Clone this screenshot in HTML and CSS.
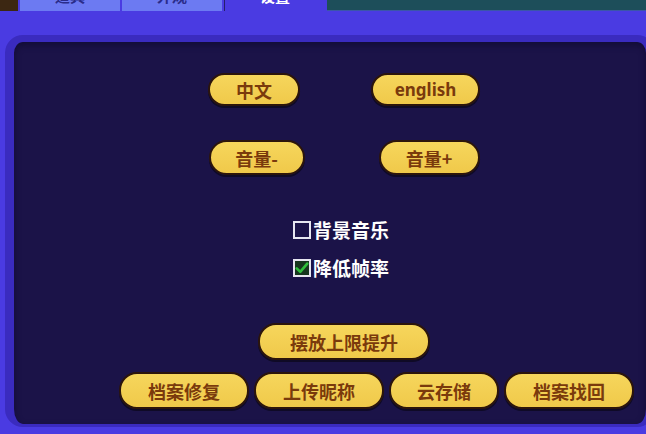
FILE: index.html
```html
<!DOCTYPE html>
<html>
<head>
	<meta charset="utf-8">
	<title>设置</title>
	<link rel="stylesheet" href="styles.css">
</head>
<body>
	<div class="tab-bar">
		<div class="tab-edge"></div>
		<div class="tab"><span>道具</span></div>
		<div class="tab"><span>外观</span></div>
		<div class="tab tab-active"><span>设置</span></div>
		<div class="tab-rest"></div>
	</div>

	<div class="panel">
		<div class="row row-lang">
			<button class="btn btn-zh">中文</button>
			<button class="btn btn-en">english</button>
		</div>
		<div class="row row-volume">
			<button class="btn btn-vol-down">音量-</button>
			<button class="btn btn-vol-up">音量+</button>
		</div>

		<div class="options">
			<label class="option">
				<span class="check"></span>背景音乐
			</label>
			<label class="option">
				<span class="check checked">
					<svg viewBox="0 0 16 16" width="14" height="14"><path d="M2 8.5 L6 12.5 L14 3" fill="none" stroke="#2fbf3c" stroke-width="3" stroke-linecap="round" stroke-linejoin="round"/></svg>
				</span>降低帧率
			</label>
		</div>

		<div class="row row-limit">
			<button class="btn btn-limit">摆放上限提升</button>
		</div>
		<div class="row row-save">
			<button class="btn btn-save">档案修复</button>
			<button class="btn btn-save">上传昵称</button>
			<button class="btn btn-cloud">云存储</button>
			<button class="btn btn-save">档案找回</button>
		</div>
	</div>
</body>
</html>
```

FILE: styles.css
```css
body{
	margin: 0;
	width: 646px;
	height: 434px;
	overflow: hidden;
	background: #4a3be2;
	font-family: "Noto Sans CJK SC", "Noto Sans", sans-serif;
}

/* tabs, only their lower edge is on screen */
.tab-bar{
	display: flex;
	height: 11px;
	overflow: hidden;
}
.tab-edge{
	width: 18px;
	background: #3c2712;
}
.tab{
	width: 100px;
	margin-left: 2px;
	background: #6c7af2;
	color: #2a2c8a;
	font-size: 15px;
	font-weight: bold;
	text-align: center;
	overflow: hidden;
}
.tab span{
	display: block;
	margin-top: -13px;
	line-height: 18px;
}
.tab-active{
	background: #4a3be2;
	color: #ffffff;
	border-left: 1px solid #26206a;
}
.tab-rest{
	flex: 1;
	margin-left: 2px;
	background: #1d4e5a;
	border-bottom: 1px solid #3b56a8;
}

/* dark settings board */
.panel{
	margin: 24px -9px 0 5px;
	height: 382px;
	border: 9px solid #3a2bbf;
	border-top-width: 7px;
	border-bottom-width: 3px;
	border-radius: 18px;
	background: #1b1348;
	box-shadow: inset 0 3px 6px #120c36;
	display: flex;
	flex-direction: column;
	align-items: center;
	padding-left: 28px;
	box-sizing: content-box;
	width: 604px;
}

.row{
	display: flex;
	justify-content: center;
}
.row-lang{
	margin-top: 31px;
	gap: 71px;
}
.row-volume{
	margin-top: 34px;
	gap: 74px;
}
.row-limit{
	margin-top: 45px;
}
.row-save{
	margin-top: 12px;
	align-self: flex-end;
	margin-right: 12px;
	gap: 5px;
}

.btn{
	height: 35px;
	padding: 0;
	border: 2px solid #2c150b;
	border-radius: 18px;
	background: linear-gradient(#f6d65c, #f0c94a);
	color: #7a3a0c;
	font-family: "Noto Sans CJK SC", sans-serif;
	font-size: 18px;
	font-weight: bold;
	box-shadow: 0 2px 0 #0f0a26;
}
.btn-zh{ width: 92px; height: 33px; }
.btn-en{ width: 109px; height: 33px; font-family: "Noto Sans", sans-serif; font-size: 17px; }
.btn-vol-down{ width: 96px; }
.btn-vol-up{ width: 101px; }
.btn-limit{ width: 172px; height: 37px; }
.btn-save{ width: 130px; height: 37px; }
.btn-cloud{ width: 110px; height: 37px; }

/* toggles */
.options{
	margin-top: 44px;
	display: flex;
	flex-direction: column;
	gap: 17px;
	margin-left: -6px;
}
.option{
	display: flex;
	align-items: center;
	color: #ffffff;
	font-size: 19px;
	font-weight: bold;
	line-height: 21px;
}
.check{
	width: 14px;
	height: 14px;
	border: 2px solid #e6e6f0;
	margin-right: 2px;
	display: flex;
	align-items: center;
	justify-content: center;
}
.check.checked{
	background: #16361e;
}
```
